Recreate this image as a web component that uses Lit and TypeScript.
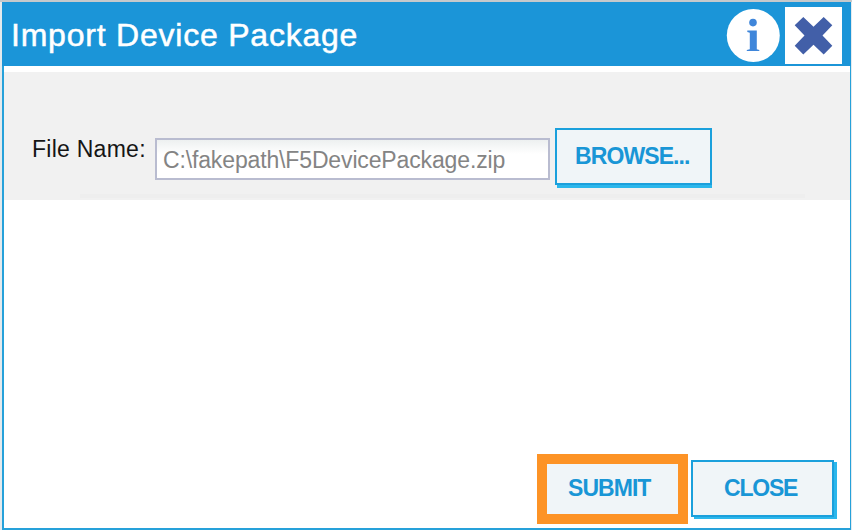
import { LitElement, html, css } from "lit";
import { customElement, property } from "lit/decorators.js";

@customElement("dialog-header")
class DialogHeader extends LitElement {
  @property() heading = "";

  static styles = css`
    :host { display: flex; height: 64px; box-sizing: border-box; background: #1b95d8; padding: 0 9px; }
    .title { margin: 0; flex: 1; color: #fff; font: 400 32px/37px "Liberation Sans", Arial, sans-serif;
      letter-spacing: 0.78px; padding-top: 15px; white-space: nowrap; -webkit-text-stroke: 0.5px #fff; }
    .info { width: 54px; height: 54px; margin: 6px 5px 0 0; }
    .close { width: 57px; height: 57px; margin-top: 5px; background: #fff; }
    svg { display: block; }
  `;

  render() {
    return html`
      <h1 class="title">${this.heading}</h1>
      <svg class="info" viewBox="0 0 54 54" role="img" aria-label="Info">
        <circle cx="27.3" cy="27.500" r="26.5" fill="#fff" />
        <circle cx="27" cy="14.600" r="3.800" fill="#3f86da" />
        <path d="M21.300 22.500H30.800V41.300L33.300 42V43H20.800V42L23.800 41.300V24.800L21.300 24Z" fill="#3f86da" />
      </svg>
      <svg class="close" viewBox="0 0 57 57" role="img" aria-label="Close">
        <path d="M18.300 10L28.500 19.800L38.700 10L47.300 18.300L37.500 28.500L47.300 38.700L38.700 47.500L28.500 37.700L18.300 47.500L9.700 38.700L19.500 28.500L9.700 18.300Z" fill="#425fa8" />
      </svg>
    `;
  }
}

@customElement("app-root")
class AppRoot extends LitElement {
  static styles = css`
    :host { display: flex; box-sizing: border-box; width: 852px; height: 530px; overflow: hidden;
      background: #e4eaed; padding-left: 2px; border-top: 2px solid #c5c9cc;
      font-family: "Liberation Sans", Arial, sans-serif; }
    .dialog { flex: 1; display: flex; flex-direction: column; box-sizing: border-box; background: #fff;
      border: 2px solid #26a1da; border-top: 0; border-right-width: 1px; margin-right: 1px; min-width: 0; }
    dialog-header { margin: 0 -1px 0 -2px; }
    .form { display: flex; align-items: flex-start; box-sizing: border-box; height: 128px; margin-top: 6px;
      padding-left: 28px; background: linear-gradient(#eeeeee, #eeeeee) 76px 122px / 725px 4px no-repeat #f1f1f1; }
    .label { width: 123px; padding-top: 64px; font-size: 23px; line-height: 27px; letter-spacing: 0.26px;
      white-space: nowrap; color: #151515; }
    .field { box-sizing: border-box; width: 395px; height: 42px; margin: 66px 5px 0 0; padding: 2px 6px 0;
      border: 2px solid #b9bcd0; border-radius: 0; background: linear-gradient(#edf0f0, #fff 14px);
      font: 23px "Liberation Sans", Arial, sans-serif; letter-spacing: -0.14px; color: #848484; outline: none; }
    .btn { box-sizing: border-box; margin: 0; padding: 0 0 2px; border: 2px solid #1ba0dc; border-radius: 0;
      background: #f0f5f8; color: #1996d6; font: 700 23px/26px "Liberation Sans", Arial, sans-serif;
      letter-spacing: -0.95px; text-align: left; white-space: nowrap; }
    .browse { width: 157px; height: 57px; margin-top: 56px; padding-left: 18px;
      box-shadow: 1px 4px 0 -1px #2bb7ec; letter-spacing: -0.9px; }
    .actions { display: flex; margin-top: auto; justify-content: flex-end; align-items: flex-start; height: 74px;
      gap: 3px; padding-right: 16px; }
    .submit { width: 151px; height: 70px; border: 10px solid #fd9326; padding-left: 21px; }
    .close { width: 143px; height: 57px; margin-top: 6px; padding-left: 31px; box-shadow: 3px 2px 0 #2bb7ec;
      letter-spacing: -1.2px; }
  `;

  render() {
    return html`
      <section class="dialog">
        <dialog-header heading="Import Device Package"></dialog-header>
        <div class="form">
          <label class="label" for="file">File Name:</label>
          <input class="field" id="file" readonly .value=${"C:\\fakepath\\F5DevicePackage.zip"} />
          <button class="btn browse">BROWSE...</button>
        </div>
        <footer class="actions">
          <button class="btn submit">SUBMIT</button>
          <button class="btn close">CLOSE</button>
        </footer>
      </section>
    `;
  }
}
